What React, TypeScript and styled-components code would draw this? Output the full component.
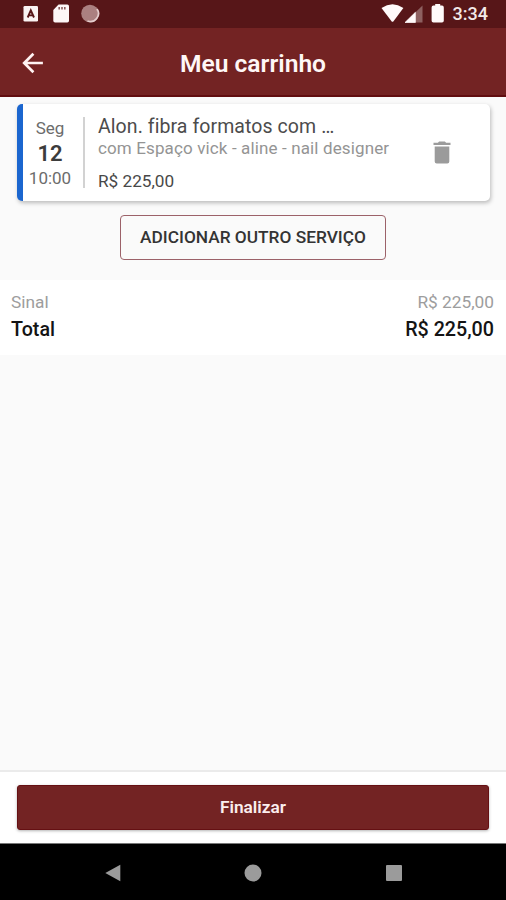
import React from "react";
import styled, { createGlobalStyle } from "styled-components";

const GlobalStyle = createGlobalStyle`
  *, *::before, *::after { box-sizing: border-box; }
  body { margin: 0; }
  button { font-family: inherit; margin: 0; padding: 0; cursor: pointer; }
`;

const Screen = styled.div`
  display: flex;
  flex-direction: column;
  width: 100%;
  height: 100vh;
  overflow: hidden;
  background: #fafafa;
  font-family: Roboto, sans-serif;
`;

const StatusBar = styled.div`
  flex: none;
  display: flex;
  align-items: center;
  justify-content: space-between;
  height: 28px;
  padding: 0 18px 0 23px;
  background: #571618;
`;

const StatusIcons = styled.div`
  display: flex;
  align-items: center;
  height: 28px;
`;

const Clock = styled.span`
  margin-left: 8px;
  color: #f3e9e9;
  font-size: 18px;
  font-weight: 500;
  line-height: 28px;
`;

const AppBar = styled.header`
  flex: none;
  display: grid;
  grid-template-columns: 66px 1fr 66px;
  align-items: center;
  height: 69px;
  background: #732323;
  border-bottom: 2px solid #610d10;
`;

const BackButton = styled.button`
  display: flex;
  align-items: center;
  justify-content: center;
  height: 48px;
  padding-top: 2px;
  border: 0;
  background: none;
`;

const Title = styled.h1`
  margin: 5px 0 0;
  color: #fff7f6;
  font-size: 24.6px;
  font-weight: 600;
  line-height: 32px;
  text-align: center;
`;

const Content = styled.main`
  flex: 1;
  display: flex;
  flex-direction: column;
  min-height: 0;
`;

const Card = styled.article`
  display: flex;
  align-items: center;
  height: 97px;
  margin: 7px 16.5px 0 17px;
  background: #fff;
  border-left: 6px solid #1b66cf;
  border-radius: 5px;
  box-shadow: 1px 2px 4px rgba(0, 0, 0, 0.26);
`;

const DateColumn = styled.div`
  flex: none;
  display: flex;
  flex-direction: column;
  align-items: center;
  width: 62px;
  height: 71px;
  padding-right: 6px;
  border-right: 2px solid #d2d2d2;
`;

const DateText = styled.span<{ $strong?: boolean }>`
  flex: none;
  height: ${(p) => (p.$strong ? 27 : 23)}px;
  color: ${(p) => (p.$strong ? "#3c3c3c" : "#6c6c6c")};
  font-size: ${(p) => (p.$strong ? 22 : 17)}px;
  font-weight: ${(p) => (p.$strong ? 600 : 400)};
  line-height: ${(p) => (p.$strong ? 27 : 22)}px;
`;

const Details = styled.div`
  flex: 1;
  display: flex;
  flex-direction: column;
  height: 77px;
  padding-left: 13px;
  white-space: nowrap;
`;

const ServiceName = styled.span`
  height: 24px;
  color: #4c4c4c;
  font-size: 19.5px;
  line-height: 26px;
  letter-spacing: 0.08px;
`;

const Provider = styled.span`
  color: #949494;
  font-size: 17px;
  line-height: 21px;
  letter-spacing: 0.13px;
`;

const Price = styled.span`
  margin-top: 12px;
  color: #484848;
  font-size: 17.2px;
  line-height: 20px;
`;

const RemoveButton = styled.button`
  display: flex;
  align-items: center;
  justify-content: center;
  width: 48px;
  height: 48px;
  margin-right: 23.5px;
  border: 0;
  background: none;
`;

const AddButton = styled.button`
  align-self: center;
  width: 266px;
  height: 45px;
  margin-top: 14px;
  border: 1px solid #9c6269;
  border-radius: 4px;
  background: #fafafa;
  color: #343434;
  font-size: 17.3px;
  font-weight: 500;
  line-height: 43px;
`;

const Summary = styled.section`
  height: 75px;
  margin-top: 20px;
  padding: 10px 12px 0 11px;
  background: #fff;
`;

const SummaryRow = styled.div<{ $total?: boolean }>`
  display: flex;
  justify-content: space-between;
  height: ${(p) => (p.$total ? 30 : 25)}px;
  color: ${(p) => (p.$total ? "#141414" : "#9d9d9d")};
  font-size: ${(p) => (p.$total ? 19.7 : 17.3)}px;
  font-weight: ${(p) => (p.$total ? 500 : 400)};
  line-height: ${(p) => (p.$total ? 30 : 25)}px;
`;

const Footer = styled.footer`
  flex: none;
  height: 73px;
  padding: 13px 17px 0;
  background: #fff;
  border-top: 2px solid #ebebeb;
`;

const CheckoutButton = styled.button`
  width: 100%;
  height: 45px;
  border: 1px solid #651013;
  border-radius: 3px;
  background: #732323;
  box-shadow: 0 1px 3px rgba(0, 0, 0, 0.3);
  color: #fbeeee;
  font-size: 17.3px;
  font-weight: 600;
  line-height: 43px;
`;

const NavBar = styled.nav`
  flex: none;
  display: grid;
  grid-template-columns: repeat(3, 140.5px);
  justify-content: center;
  align-items: center;
  justify-items: center;
  height: 57px;
  padding-top: 2px;
  background: #000;
  border-top: 1px solid #777;
`;

const KeyboardIcon = () => (
  <svg width="16" height="28" viewBox="0 0 16 28">
    <rect x="0.5" y="6" width="14.5" height="15.5" rx="1.3" fill="#faf3f3" />
    <path d="M4.7 17.5 7.8 10.3 11 17.5M5.8 15.4h4" fill="none" stroke="#571618" strokeWidth="1.9" />
  </svg>
);

const SdCardIcon = () => (
  <svg width="17" height="28" viewBox="0 0 17 28">
    <path d="M5.6 4.5h8.7q1.7 0 1.7 1.7v14.6q0 1.8-1.7 1.8H2.1q-1.8 0-1.8-1.8V10z" fill="#fdf7f7" />
    <path d="M6.2 7v2.4M9 7v2.4M11.8 7v2.4" stroke="#8a5c5c" strokeWidth="1.6" />
  </svg>
);

const SyncIcon = () => (
  <svg width="20" height="28" viewBox="0 0 20 28">
    <circle cx="10" cy="13.5" r="8.8" fill="#ab8080" />
    <path d="M17 9a8 8 0 0 1-9.5 12" fill="none" stroke="#e5cccc" strokeWidth="1.8" />
  </svg>
);

const IconGap = styled.span<{ $w: number }>`
  width: ${(p) => p.$w}px;
`;

const WifiIcon = () => (
  <svg width="23" height="28" viewBox="0 0 23 28">
    <path d="M.5 8Q11.5 .6 22.4 8L12.3 21.4q-.8.9-1.6 0z" fill="#fffafa" />
  </svg>
);

const SignalIcon = () => (
  <svg width="19" height="28" viewBox="0 0 19 28">
    <path d="M18.5 5.5v17H1z" fill="#8d6060" />
    <path d="M11.4 12.3v10.2H1z" fill="#fffafa" stroke="#fffafa" strokeWidth=".7" strokeLinejoin="round" />
  </svg>
);

const BatteryIcon = () => (
  <svg width="14" height="28" viewBox="0 0 14 28">
    <path d="M4.2 4h5v1.6H11q1.8 0 1.8 1.8v13.4q0 1.8-1.8 1.8H2.4q-1.8 0-1.8-1.8V7.4q0-1.8 1.8-1.8h1.8z" fill="#fffafa" />
  </svg>
);

const BackIcon = () => (
  <svg width="22" height="22" viewBox="0 0 22 22">
    <path d="M20.9 11H2.4M11.4 1.8 2.2 11l9.2 9.2" fill="none" stroke="#fff3f2" strokeWidth="2.7" />
  </svg>
);

const TrashIcon = () => (
  <svg width="18" height="24" viewBox="0 0 18 24">
    <path d="M.5 1.8h4.4L6.1.5h5.8l1.2 1.3h4.4v2.1H.5zM1.7 5.4h14.6v15.2q0 2-2 2H3.7q-2 0-2-2z" fill="#9b9b9b" />
  </svg>
);

export default function App() {
  return (
    <Screen>
      <GlobalStyle />
      <StatusBar>
        <StatusIcons>
          <KeyboardIcon />
          <IconGap $w={14} />
          <SdCardIcon />
          <IconGap $w={10} />
          <SyncIcon />
        </StatusIcons>
        <StatusIcons>
          <WifiIcon />
          <SignalIcon />
          <IconGap $w={8} />
          <BatteryIcon />
          <Clock>3:34</Clock>
        </StatusIcons>
      </StatusBar>
      <AppBar>
        <BackButton aria-label="Voltar">
          <BackIcon />
        </BackButton>
        <Title>Meu carrinho</Title>
      </AppBar>
      <Content>
        <Card>
          <DateColumn>
            <DateText>Seg</DateText>
            <DateText $strong>12</DateText>
            <DateText>10:00</DateText>
          </DateColumn>
          <Details>
            <ServiceName>Alon. fibra formatos com …</ServiceName>
            <Provider>com Espaço vick - aline - nail designer</Provider>
            <Price>R$ 225,00</Price>
          </Details>
          <RemoveButton aria-label="Remover">
            <TrashIcon />
          </RemoveButton>
        </Card>
        <AddButton>ADICIONAR OUTRO SERVIÇO</AddButton>
        <Summary>
          <SummaryRow>
            <span>Sinal</span>
            <span>R$ 225,00</span>
          </SummaryRow>
          <SummaryRow $total>
            <span>Total</span>
            <span>R$ 225,00</span>
          </SummaryRow>
        </Summary>
      </Content>
      <Footer>
        <CheckoutButton>Finalizar</CheckoutButton>
      </Footer>
      <NavBar>
        <svg width="16" height="18" viewBox="0 0 16 18">
          <path d="M15.3.8v16.4L.3 9z" fill="#9b9b9b" />
        </svg>
        <svg width="18" height="18" viewBox="0 0 18 18">
          <circle cx="9" cy="9" r="8.5" fill="#9b9b9b" />
        </svg>
        <svg width="18" height="18" viewBox="0 0 18 18">
          <rect x="1" y="1" width="16" height="16" rx="1" fill="#9b9b9b" />
        </svg>
      </NavBar>
    </Screen>
  );
}
